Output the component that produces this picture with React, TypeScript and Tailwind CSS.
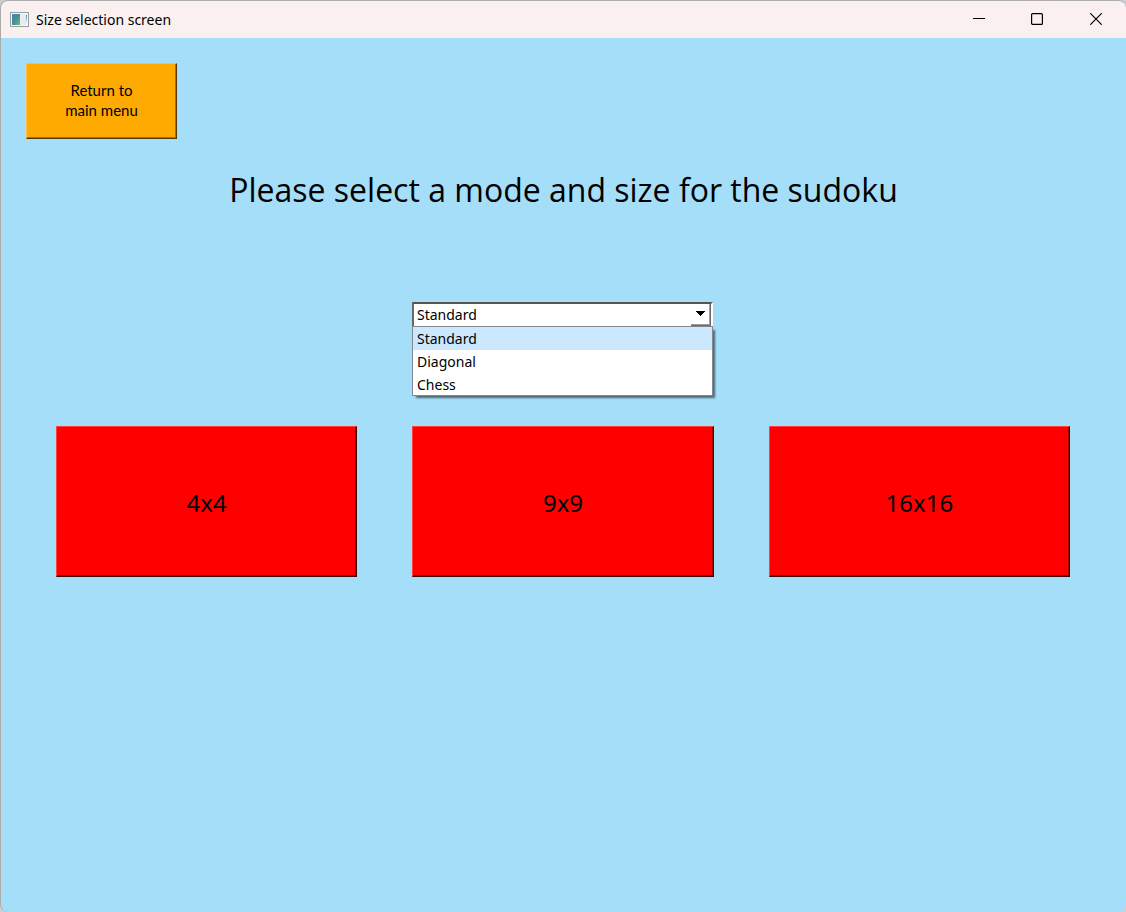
import { useState } from "react";

const MODES = ["Standard", "Diagonal", "Chess"];
const SIZES = ["4x4", "9x9", "16x16"];

function TitleBar() {
  return (
    <header className="flex h-[37px] shrink-0 items-center bg-[#f9f0ef] pl-[9px]">
      <svg width="19" height="15" viewBox="0 0 19 15" aria-hidden="true">
        <defs>
          <linearGradient id="pane" x1="0" y1="0" x2="1" y2="1">
            <stop offset="0" stopColor="#4f86ae" />
            <stop offset="0.5" stopColor="#468f94" />
            <stop offset="1" stopColor="#6fbd7d" />
          </linearGradient>
          <linearGradient id="side" x1="0" y1="0" x2="0" y2="1">
            <stop offset="0" stopColor="#4b83b4" />
            <stop offset="1" stopColor="#e4f3ea" />
          </linearGradient>
        </defs>
        <rect x="0.5" y="0.5" width="18" height="14" fill="#f5f7f8" stroke="#9b9da0" />
        <rect x="2" y="2" width="8" height="11" fill="url(#pane)" />
        <rect x="10" y="2" width="6" height="11" fill="#e9edf0" />
        <rect x="16" y="3" width="1" height="8" fill="url(#side)" />
      </svg>
      <h1 className="ml-[7px] flex-1 text-[14px] leading-5">Size selection screen</h1>
      <div className="flex h-full pb-px">
        <button type="button" aria-label="Minimize" className="flex w-[58px] items-center justify-center">
          <svg width="12" height="12" viewBox="0 0 12 12" shapeRendering="crispEdges">
            <path d="M0 5.5h12" stroke="#000" />
          </svg>
        </button>
        <button type="button" aria-label="Maximize" className="flex w-[58px] items-center justify-center">
          <svg width="12" height="12" viewBox="0 0 12 12">
            <rect x="0.6" y="0.6" width="10.8" height="10.8" rx="1" fill="none" stroke="#000" strokeWidth="1.2" />
          </svg>
        </button>
        <button type="button" aria-label="Close" className="flex w-[60px] items-center justify-center">
          <svg width="12" height="12" viewBox="0 0 12 12">
            <path d="M0.3 0.3l11.4 11.4M11.7 0.3L0.3 11.7" stroke="#000" strokeWidth="1.2" />
          </svg>
        </button>
      </div>
    </header>
  );
}

function ModePicker() {
  const [mode, setMode] = useState(MODES[0]);
  return (
    <div className="relative w-[301px] text-[14px]">
      <select
        aria-label="Mode"
        value={mode}
        onChange={(e) => setMode(e.target.value)}
        className="block h-[25px] w-full appearance-none rounded-none border-t-2 border-r-2 border-l-2 border-t-[#555] border-r-white border-l-[#696969] bg-white pb-[2px] pl-[3px] leading-5 outline-none"
      >
        {MODES.map((m) => (
          <option key={m}>{m}</option>
        ))}
      </select>
      <span className="pointer-events-none absolute top-[2px] right-[2px] flex h-[22px] w-5 justify-center border-r border-b border-[#696969] pt-[7px] shadow-[inset_-1px_-1px_#a0a0a0]">
        <svg width="9" height="5" viewBox="0 0 9 5" shapeRendering="crispEdges">
          <path d="M0 0h9v1H8v1H7v1H6v1H5v1H4V4H3V3H2V2H1V1H0z" />
        </svg>
      </span>
      <ul
        role="listbox"
        aria-label="Modes"
        className="absolute top-6 left-0 w-full border border-[#828790] bg-white shadow-[3px_3px_2px_-1px_rgba(0,0,0,0.55)]"
      >
        {MODES.map((m) => (
          <li
            key={m}
            role="option"
            aria-selected={m === mode}
            onClick={() => setMode(m)}
            className="h-[23px] pl-1 leading-6 last:h-[22px] aria-selected:bg-[#cce8ff]"
          >
            {m}
          </li>
        ))}
      </ul>
    </div>
  );
}

export default function App() {
  return (
    <div className="min-h-screen bg-[#cfcfcf] font-['Noto_Sans','Open_Sans',sans-serif] text-black">
      <div className="flex min-h-screen flex-col overflow-hidden rounded-lg border-t border-l border-[#ababab] bg-[#a5def9]">
        <TitleBar />
        <main className="flex flex-1 flex-col pt-[25px]">
          <button
            type="button"
            className="ml-[25px] h-[76px] w-[151px] border border-t-[#ffbf40] border-r-[#553800] border-b-[#553800] border-l-[#ffbf40] bg-[#ffaa00] pb-[2px] font-['Lato',cursive] text-[15px] leading-5 shadow-[inset_-1px_-1px_#aa7100]"
          >
            Return to
            <br />
            main menu
          </button>
          <h2 className="mt-6 text-center font-['Open_Sans','Noto_Sans',sans-serif] text-[32px] leading-[54px]">
            Please select a mode and size for the sudoku
          </h2>
          <div className="mt-[85px] flex justify-center pr-[2px]">
            <ModePicker />
          </div>
          <div className="mt-[99px] grid grid-cols-3 gap-[55px] pr-14 pl-[55px]">
            {SIZES.map((s) => (
              <button
                key={s}
                type="button"
                className="h-[151px] border border-t-[#ff4040] border-r-[#400000] border-b-[#400000] border-l-[#ff4040] bg-[#ff0000] pt-[2px] text-[24px] shadow-[inset_-1px_-1px_#a00000]"
              >
                {s}
              </button>
            ))}
          </div>
        </main>
      </div>
    </div>
  );
}
